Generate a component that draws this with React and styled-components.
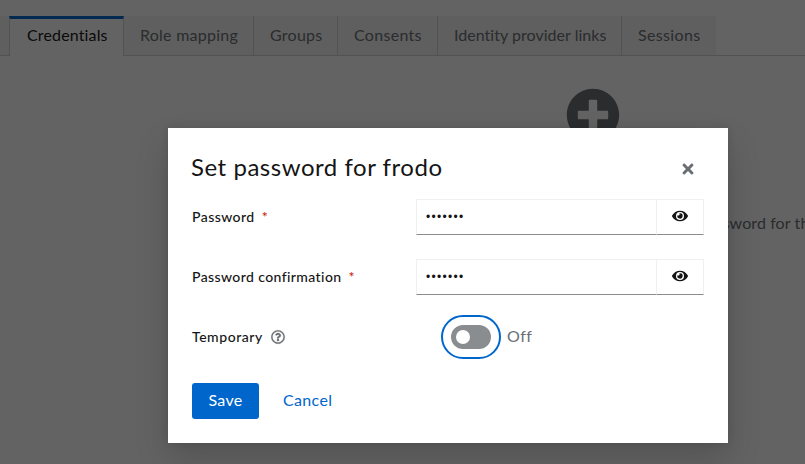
import React from 'react';
import styled, { createGlobalStyle } from 'styled-components';
import {
  FaEye, FaPlusCircle, FaRegQuestionCircle, FaTimes,
} from 'react-icons/fa';

const PALLET = {
  text: '#151515',
  muted: '#6a6e73',
  blue: '#0066cc',
  border: '#d2d2d2',
  inputBorder: '#f0f0f0',
  red: '#c9190b',
};

const TABS = [
  { name: 'Credentials', width: 115, spacing: 0.15, active: true },
  { name: 'Role mapping', width: 130, spacing: 0.25 },
  { name: 'Groups', width: 84, spacing: 0.25 },
  { name: 'Consents', width: 100, spacing: 0.3 },
  { name: 'Identity provider links', width: 184, spacing: 0.03 },
  { name: 'Sessions', width: 94, spacing: 0.35 },
];

const FIELDS = [
  { id: 'password', label: 'Password', spacing: 0.45 },
  { id: 'confirmation', label: 'Password confirmation', spacing: 0.4 },
];

const App = () => (
  <Page>
    <GlobalStyle />
    <TabBar>
      <TabScroll />
      {TABS.map((tab) => (
        <Tab key={tab.name} $active={tab.active} $width={tab.width} $spacing={tab.spacing}>
          {tab.name}
        </Tab>
      ))}
    </TabBar>
    <EmptyState>
      <FaPlusCircle size={54} />
      <EmptyBody>
        This user does not have any credentials. You can set password for this user.
      </EmptyBody>
    </EmptyState>
    <Backdrop>
      <Modal>
        <ModalHeader>
          <ModalTitle>Set password for frodo</ModalTitle>
          <CloseButton aria-label="Close"><FaTimes size={16} /></CloseButton>
        </ModalHeader>
        <Form>
          {FIELDS.map((field) => (
            <FormRow key={field.id}>
              <Label htmlFor={field.id} $spacing={field.spacing}>
                {field.label}
                <Required>*</Required>
              </Label>
              <InputGroup>
                <PasswordInput id={field.id} type="password" defaultValue="1234567" />
                <RevealButton aria-label="Show password"><FaEye size={16} /></RevealButton>
              </InputGroup>
            </FormRow>
          ))}
          <FormRow>
            <Label as="span" $spacing={0.55}>
              Temporary
              <HelpIcon size={14} />
            </Label>
            <SwitchField>
              <Switch role="switch" aria-checked="false"><SwitchKnob /></Switch>
              <SwitchText>Off</SwitchText>
            </SwitchField>
          </FormRow>
        </Form>
        <Actions>
          <SaveButton>Save</SaveButton>
          <CancelButton>Cancel</CancelButton>
        </Actions>
      </Modal>
    </Backdrop>
  </Page>
);

const GlobalStyle = createGlobalStyle`
  * {
    box-sizing: border-box;
  }

  body {
    margin: 0;
    overflow: hidden;
    background: #fff;
    color: ${PALLET.text};
    font: 16px/24px Lato, sans-serif;
  }

  button, input {
    margin: 0;
    font-family: inherit;
  }
`;

const Page = styled.div`
  position: relative;
  height: 464px;
  padding-top: 16px;
  overflow: hidden;
`;

const TabBar = styled.div`
  display: flex;
  height: 40px;
  box-shadow: inset 0 -1px ${PALLET.border};
`;

const TabScroll = styled.div`
  width: 9px;
  background: #f5f5f5;
  border-bottom: 1px solid ${PALLET.border};
`;

const Tab = styled.div`
  width: ${({ $width }) => $width}px;
  padding: ${({ $active }) => ($active ? '4px 0 0 17px' : '7px 0 0 16px')};
  background: ${({ $active }) => ($active ? '#fff' : '#f5f5f5')};
  color: ${({ $active }) => ($active ? PALLET.text : PALLET.muted)};
  border: 0 solid ${PALLET.border};
  border-width: ${({ $active }) => ($active ? '3px 1px 0' : '0 1px 1px 0')};
  border-top-color: ${PALLET.blue};
  letter-spacing: ${({ $spacing }) => $spacing}px;
  white-space: nowrap;

  &:last-child {
    border-right: 0;
  }
`;

const EmptyState = styled.div`
  display: flex;
  flex-direction: column;
  align-items: center;
  width: 424px;
  margin-left: 381px;
  padding-top: 32px;
  color: ${PALLET.muted};
`;

const EmptyBody = styled.p`
  margin: 69px 0 0;
  letter-spacing: 0.1px;
  white-space: nowrap;
`;

const Backdrop = styled.div`
  position: absolute;
  inset: 0;
  padding: 128px 77px 0 168px;
  background: rgba(3, 3, 3, 0.62);
`;

const Modal = styled.div`
  width: 560px;
  height: 315px;
  padding: 24px;
  background: #fff;
  box-shadow: 0 16px 32px rgba(3, 3, 3, 0.16), 0 0 8px rgba(3, 3, 3, 0.1);
`;

const ModalHeader = styled.div`
  display: flex;
  justify-content: space-between;
  height: 47px;
`;

const ModalTitle = styled.h1`
  margin: -1px 0 0 -1px;
  font-size: 24px;
  font-weight: 400;
  line-height: 32px;
  letter-spacing: 0.53px;
`;

const CloseButton = styled.button`
  display: flex;
  align-items: center;
  justify-content: center;
  width: 32px;
  height: 34px;
  padding: 0;
  border: 0;
  background: none;
  color: ${PALLET.muted};
`;

const Form = styled.div`
  display: grid;
  row-gap: 24px;
`;

const FormRow = styled.div`
  display: grid;
  grid-template-columns: 224px 1fr;
  height: 36px;
`;

const Label = styled.label`
  display: flex;
  align-items: center;
  font-size: 14px;
  font-weight: 500;
  letter-spacing: ${({ $spacing }) => $spacing}px;
`;

const Required = styled.span`
  margin-left: 7px;
  color: ${PALLET.red};
`;

const HelpIcon = styled(FaRegQuestionCircle)`
  margin-left: 8px;
  color: ${PALLET.muted};
  stroke-width: 8;
  overflow: visible;
`;

const InputGroup = styled.div`
  display: flex;
`;

const PasswordInput = styled.input`
  width: 241px;
  padding: 0 9px;
  border: 1px solid ${PALLET.inputBorder};
  border-bottom-color: #8a8d90;
  border-radius: 0;
  color: ${PALLET.text};
  font-family: 'Liberation Sans', sans-serif;
  font-size: 12px;
  letter-spacing: 1.3px;
  outline: 0;
`;

const RevealButton = styled.button`
  display: flex;
  align-items: center;
  justify-content: center;
  width: 47px;
  padding: 0 0 2px;
  border: 1px solid ${PALLET.inputBorder};
  border-left: 0;
  border-bottom-color: #8a8d90;
  background: #fff;
  color: ${PALLET.text};
`;

const SwitchField = styled.div`
  display: flex;
  align-items: center;
  padding-left: 35px;
`;

const Switch = styled.button`
  display: flex;
  align-items: center;
  width: 40px;
  height: 24px;
  padding: 0 5px;
  border: 0;
  border-radius: 12px;
  background: #8a8d90;
  outline: 2px solid ${PALLET.blue};
  outline-offset: 8px;
`;

const SwitchKnob = styled.span`
  width: 14px;
  height: 14px;
  border-radius: 50%;
  background: #fff;
`;

const SwitchText = styled.span`
  margin: -2px 0 0 16px;
  color: ${PALLET.muted};
  letter-spacing: 0.5px;
`;

const Actions = styled.div`
  display: flex;
  gap: 8px;
  margin-top: 28px;
`;

const Button = styled.button`
  height: 36px;
  padding: 0 16px 2px;
  border: 0;
  border-radius: 3px;
  font-size: 16px;
  line-height: 24px;
  letter-spacing: 0.35px;
`;

const SaveButton = styled(Button)`
  width: 67px;
  background: ${PALLET.blue};
  color: #fff;
`;

const CancelButton = styled(Button)`
  background: none;
  color: ${PALLET.blue};
`;

export default App;
